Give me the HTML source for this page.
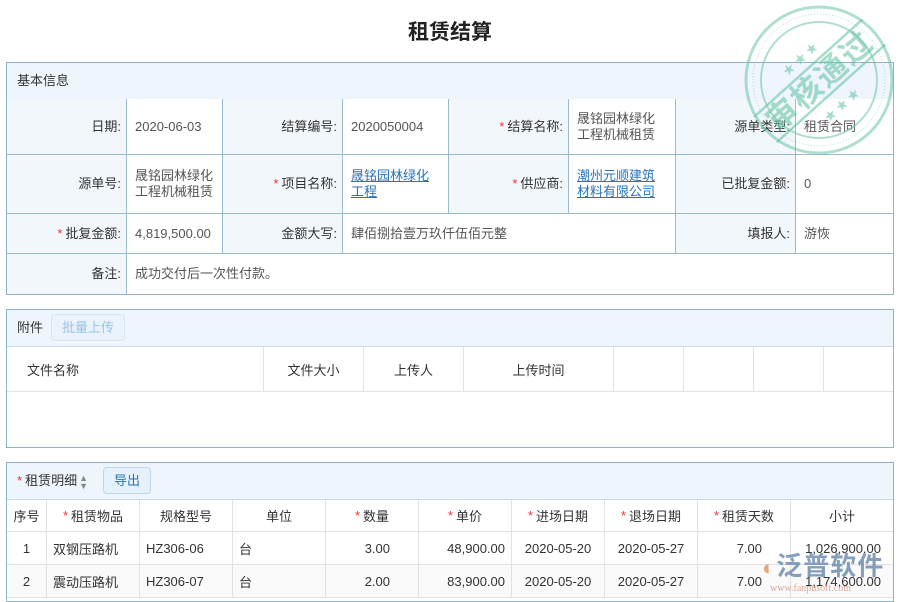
<!DOCTYPE html>
<html><head><meta charset="utf-8"><style>
*{box-sizing:border-box;margin:0;padding:0}
body{width:900px;height:600px;overflow:hidden;background:#fff;font-family:"Liberation Sans","Noto Sans CJK SC",sans-serif;font-size:13px;color:#333;position:relative}
.abs{position:absolute}
.title{left:0;width:900px;top:16px;text-align:center;font-size:21px;font-weight:bold;color:#222}
.panel{position:absolute;left:6px;width:888px;border:1px solid #8fb1c4}
.ph{background:#eef5fd;height:37px;border-bottom:1px solid #c9d9e6;padding-left:10px;line-height:36px;position:relative}
.c{position:absolute;border-right:1px solid #9bbbcc;border-bottom:1px solid #9bbbcc;display:flex;align-items:center;padding:0 8px;line-height:16px}
.l{background:#f2f7fc;justify-content:flex-end;text-align:right;padding-right:5px}
.v{background:#fff;color:#555}
.r{color:#e33;margin-right:3px}
a{color:#2a73b8;text-decoration:underline}
.btn{position:absolute;height:27px;border:1px solid #bcd6ea;border-radius:4px;background:#e6f1fb;line-height:25px;text-align:center}
.t{position:absolute;border-right:1px solid #e2e2e2;border-bottom:1px solid #e2e2e2;display:flex;align-items:center;justify-content:center}
</style></head><body>
<div class="abs title">租赁结算</div>

<div class="panel" style="top:62px;height:233px">
<div class="ph">基本信息</div>
</div>
<div class="abs" style="left:7px;top:99px;width:886px;height:195px">
<div class="c l" style="left:0;top:0;width:120px;height:56px">日期:</div>
<div class="c v" style="left:120px;top:0;width:96px;height:56px">2020-06-03</div>
<div class="c l" style="left:216px;top:0;width:120px;height:56px">结算编号:</div>
<div class="c v" style="left:336px;top:0;width:106px;height:56px">2020050004</div>
<div class="c l" style="left:442px;top:0;width:120px;height:56px"><span class="r">*</span>结算名称:</div>
<div class="c v" style="left:562px;top:0;width:107px;height:56px">晟铭园林绿化工程机械租赁</div>
<div class="c l" style="left:669px;top:0;width:120px;height:56px">源单类型:</div>
<div class="c v" style="left:789px;top:0;width:97px;height:56px;border-right:none">租赁合同</div>

<div class="c l" style="left:0;top:56px;width:120px;height:59px">源单号:</div>
<div class="c v" style="left:120px;top:56px;width:96px;height:59px">晟铭园林绿化工程机械租赁</div>
<div class="c l" style="left:216px;top:56px;width:120px;height:59px"><span class="r">*</span>项目名称:</div>
<div class="c v" style="left:336px;top:56px;width:106px;height:59px"><a>晟铭园林绿化工程</a></div>
<div class="c l" style="left:442px;top:56px;width:120px;height:59px"><span class="r">*</span>供应商:</div>
<div class="c v" style="left:562px;top:56px;width:107px;height:59px"><a>潮州元顺建筑材料有限公司</a></div>
<div class="c l" style="left:669px;top:56px;width:120px;height:59px">已批复金额:</div>
<div class="c v" style="left:789px;top:56px;width:97px;height:59px;border-right:none">0</div>

<div class="c l" style="left:0;top:115px;width:120px;height:40px"><span class="r">*</span>批复金额:</div>
<div class="c v" style="left:120px;top:115px;width:96px;height:40px">4,819,500.00</div>
<div class="c l" style="left:216px;top:115px;width:120px;height:40px">金额大写:</div>
<div class="c v" style="left:336px;top:115px;width:333px;height:40px">肆佰捌拾壹万玖仟伍佰元整</div>
<div class="c l" style="left:669px;top:115px;width:120px;height:40px">填报人:</div>
<div class="c v" style="left:789px;top:115px;width:97px;height:40px;border-right:none">游恢</div>

<div class="c l" style="left:0;top:155px;width:120px;height:40px;border-bottom:none">备注:</div>
<div class="c v" style="left:120px;top:155px;width:766px;height:40px;border-right:none;border-bottom:none">成功交付后一次性付款。</div>
</div>

<div class="panel" style="top:309px;height:139px">
<div class="ph">附件</div>
</div>
<div class="btn" style="left:51px;top:314px;width:74px;color:#9cc3e3;background:#eaf3fb;border-color:#d5e5f2">批量上传</div>
<div class="abs" style="left:7px;top:347px;width:886px;height:45px">
<div class="t" style="left:0;top:0;width:257px;height:45px;justify-content:flex-start;padding-left:20px">文件名称</div>
<div class="t" style="left:257px;top:0;width:100px;height:45px">文件大小</div>
<div class="t" style="left:357px;top:0;width:100px;height:45px">上传人</div>
<div class="t" style="left:457px;top:0;width:150px;height:45px">上传时间</div>
<div class="t" style="left:607px;top:0;width:70px;height:45px"></div>
<div class="t" style="left:677px;top:0;width:70px;height:45px"></div>
<div class="t" style="left:747px;top:0;width:70px;height:45px"></div>
<div class="t" style="left:817px;top:0;width:69px;height:45px;border-right:none"></div>
</div>

<div class="panel" style="top:462px;height:140px">
<div class="ph"><span class="r">*</span>租赁明细<span style="display:inline-block;width:12px;color:#888;font-size:9px;line-height:8px;vertical-align:middle;margin-left:2px">▲<br>▼</span></div>
</div>
<div class="btn" style="left:103px;top:467px;width:48px;color:#2a73b8">导出</div>
<div class="abs" style="left:7px;top:500px;width:886px;height:100px;font-size:13px">
<div class="t" style="left:0;top:0;width:40px;height:32px">序号</div>
<div class="t" style="left:40px;top:0;width:93px;height:32px"><span class="r">*</span>租赁物品</div>
<div class="t" style="left:133px;top:0;width:93px;height:32px">规格型号</div>
<div class="t" style="left:226px;top:0;width:93px;height:32px">单位</div>
<div class="t" style="left:319px;top:0;width:93px;height:32px"><span class="r">*</span>数量</div>
<div class="t" style="left:412px;top:0;width:93px;height:32px"><span class="r">*</span>单价</div>
<div class="t" style="left:505px;top:0;width:93px;height:32px"><span class="r">*</span>进场日期</div>
<div class="t" style="left:598px;top:0;width:93px;height:32px"><span class="r">*</span>退场日期</div>
<div class="t" style="left:691px;top:0;width:93px;height:32px"><span class="r">*</span>租赁天数</div>
<div class="t" style="left:784px;top:0;width:102px;height:32px;border-right:none">小计</div>

<div class="t" style="left:0;top:32px;width:40px;height:33px">1</div>
<div class="t" style="left:40px;top:32px;width:93px;height:33px;justify-content:flex-start;padding-left:6px">双钢压路机</div>
<div class="t" style="left:133px;top:32px;width:93px;height:33px;justify-content:flex-start;padding-left:6px">HZ306-06</div>
<div class="t" style="left:226px;top:32px;width:93px;height:33px;justify-content:flex-start;padding-left:6px">台</div>
<div class="t" style="left:319px;top:32px;width:93px;height:33px;justify-content:flex-end;padding-right:28px">3.00</div>
<div class="t" style="left:412px;top:32px;width:93px;height:33px;justify-content:flex-end;padding-right:6px">48,900.00</div>
<div class="t" style="left:505px;top:32px;width:93px;height:33px">2020-05-20</div>
<div class="t" style="left:598px;top:32px;width:93px;height:33px">2020-05-27</div>
<div class="t" style="left:691px;top:32px;width:93px;height:33px;justify-content:flex-end;padding-right:28px">7.00</div>
<div class="t" style="left:784px;top:32px;width:102px;height:33px;border-right:none;justify-content:flex-end;padding-right:12px">1,026,900.00</div>

<div style="position:absolute;left:0;top:65px;width:886px;height:33px;background:#fafafa"></div>
<div class="t" style="left:0;top:65px;width:40px;height:33px">2</div>
<div class="t" style="left:40px;top:65px;width:93px;height:33px;justify-content:flex-start;padding-left:6px">震动压路机</div>
<div class="t" style="left:133px;top:65px;width:93px;height:33px;justify-content:flex-start;padding-left:6px">HZ306-07</div>
<div class="t" style="left:226px;top:65px;width:93px;height:33px;justify-content:flex-start;padding-left:6px">台</div>
<div class="t" style="left:319px;top:65px;width:93px;height:33px;justify-content:flex-end;padding-right:28px">2.00</div>
<div class="t" style="left:412px;top:65px;width:93px;height:33px;justify-content:flex-end;padding-right:6px">83,900.00</div>
<div class="t" style="left:505px;top:65px;width:93px;height:33px">2020-05-20</div>
<div class="t" style="left:598px;top:65px;width:93px;height:33px">2020-05-27</div>
<div class="t" style="left:691px;top:65px;width:93px;height:33px;justify-content:flex-end;padding-right:28px">7.00</div>
<div class="t" style="left:784px;top:65px;width:102px;height:33px;border-right:none;justify-content:flex-end;padding-right:12px">1,174,600.00</div>
</div>

<!-- stamp -->
<svg class="abs" style="left:740px;top:0" width="160" height="160" viewBox="0 0 160 160">
<g opacity="0.55" fill="none" stroke="#6cc6a8">
<circle cx="79" cy="80" r="73" stroke-width="3"/>
<circle cx="79" cy="80" r="66" stroke-width="1" stroke-dasharray="1 2"/>
<circle cx="79" cy="80" r="58" stroke-width="2"/>
</g>
<g transform="rotate(-42 79 80)" opacity="0.6">
<line x1="6" y1="64" x2="152" y2="64" stroke="#6cc6a8" stroke-width="2.5"/>
<line x1="6" y1="98" x2="152" y2="98" stroke="#6cc6a8" stroke-width="2.5"/>
<text x="79" y="92" text-anchor="middle" font-size="31" font-weight="bold" fill="#6cc6a8" font-family="Noto Sans CJK SC,sans-serif" letter-spacing="2">审核通过</text>
<text x="79" y="56" text-anchor="middle" font-size="12" fill="#6cc6a8">★ ★ ★</text>
<text x="79" y="118" text-anchor="middle" font-size="12" fill="#6cc6a8">★ ★ ★</text>
</g>
</svg>

<!-- watermark logo -->
<div class="abs" style="left:762px;top:551px;font-size:26px;color:#5d7fa6;opacity:0.75;font-weight:bold;letter-spacing:1px;line-height:30px"><span style="color:#e08b5a;font-size:22px">◐</span>泛普软件</div>
<div class="abs" style="left:770px;top:583px;font-size:10px;color:#d9927a;opacity:0.8;font-family:'Liberation Serif',serif">www.fanpusoft.com</div>
</body></html>
